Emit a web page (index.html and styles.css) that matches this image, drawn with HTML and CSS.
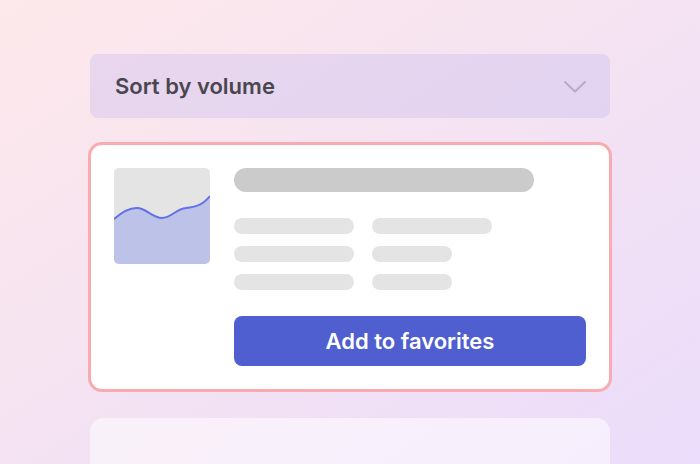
FILE: index.html
```html
<!DOCTYPE html>
<html>
<head>
<meta charset="utf-8">
<link rel="stylesheet" href="styles.css">
</head>
<body>
<main class="stack">
  <div class="select">
    <span class="select-label">Sort by volume</span>
    <svg class="chevron" width="24" height="12" viewBox="0 0 24 12"><polyline points="2,1 12,10.5 22,1" fill="none" stroke="#bba9ca" stroke-width="2" stroke-linecap="round" stroke-linejoin="round"/></svg>
  </div>
  <section class="card">
    <div class="thumb">
      <svg width="96" height="96" viewBox="0 0 96 96">
        <path d="M0 51 C 8 44, 16 39, 24 40 C 33 41, 39 50, 48 50 C 57 50, 62 41, 72 40 C 80 39, 88 38, 96 28 L96 96 L0 96 Z" fill="#bcc2e8"/>
        <path d="M0 51 C 8 44, 16 39, 24 40 C 33 41, 39 50, 48 50 C 57 50, 62 41, 72 40 C 80 39, 88 38, 96 28" fill="none" stroke="#6371e6" stroke-width="2"/>
      </svg>
    </div>
    <div class="info">
      <div class="title-bar"></div>
      <div class="lines">
        <div class="line w120"></div><div class="line w120"></div>
        <div class="line w120"></div><div class="line w80"></div>
        <div class="line w120"></div><div class="line w80"></div>
      </div>
      <button class="fav">Add to favorites</button>
    </div>
  </section>
  <section class="ghost"></section>
</main>
</body>
</html>
```
FILE: styles.css
```css
html, body {
  margin: 0;
  height: 100%;
}
body {
  overflow: hidden;
  background: linear-gradient(to bottom right, #fde8ea 0%, #f3e2f3 55%, #ebdcfb 100%);
  font-family: Inter, "Noto Sans", sans-serif;
}
.stack {
  width: 520px;
  margin: 0 auto;
  padding-top: 54px;
  display: flex;
  flex-direction: column;
}
.select {
  height: 64px;
  border-radius: 8px;
  background: rgba(190, 180, 240, 0.3);
  display: flex;
  align-items: center;
  justify-content: space-between;
  padding: 0 23px 0 25px;
}
.select-label {
  font-size: 22px;
  font-weight: 600;
  color: #4a4650;
}
.chevron {
  display: block;
  margin-top: 2px;
}
.card {
  margin: 24px -2px 0;
  border: 3px solid #f8acb2;
  border-radius: 14px;
  background: #fff;
  padding: 23px;
  display: flex;
  gap: 24px;
}
.thumb {
  width: 96px;
  height: 96px;
  border-radius: 5px;
  background: #e4e4e4;
  overflow: hidden;
  flex: none;
}
.thumb svg { display: block; }
.info {
  flex: 1;
  display: flex;
  flex-direction: column;
}
.title-bar {
  width: 300px;
  height: 24px;
  border-radius: 12px;
  background: #cbcbcb;
}
.lines {
  margin-top: 26px;
  display: grid;
  grid-template-columns: 120px 120px;
  column-gap: 18px;
  row-gap: 12px;
}
.line {
  height: 16px;
  border-radius: 8px;
  background: #e4e4e4;
}
.w120 { width: 120px; }
.w80 { width: 80px; }
.fav {
  margin-top: 26px;
  height: 50px;
  border: none;
  border-radius: 8px;
  background: #4f5fcf;
  color: #fff;
  font-family: Inter, "Noto Sans", sans-serif;
  font-size: 22px;
  font-weight: 600;
  padding: 0;
}
.ghost {
  margin-top: 26px;
  height: 46px;
  border-radius: 14px 14px 0 0;
  background: rgba(255, 255, 255, 0.5);
}
```
